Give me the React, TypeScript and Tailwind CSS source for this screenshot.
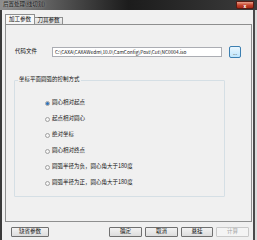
import React from "react"

const font = { fontFamily: '"Noto Sans CJK SC", "Noto Sans", sans-serif' }

export default function App() {
  return (
    <div className="w-[257px] h-[240px] flex flex-col bg-[#f0f0f0] overflow-hidden" style={font}>
      {/* Title bar */}
      <div className="h-[10px] flex items-center bg-gradient-to-r from-[#8d8d8d] via-[#1c1c1c] to-[#3c3c3c]">
        <span className="pl-[3px] text-[5.5px] leading-none text-[#1a1a1a] [text-shadow:0_0_3px_rgb(255_255_255_/_60%)]">
          后置处理(线切割)
        </span>
        <div className="ml-auto mr-[3px] w-[18px] h-[8px] rounded-b-[2px] border border-[#5a1a12] bg-gradient-to-b from-[#e8a08c] via-[#c7452d] to-[#a52a17] flex items-center justify-center">
          <span className="text-[5px] leading-none font-bold text-white">x</span>
        </div>
      </div>

      {/* Body with frame */}
      <div className="flex-1 flex">
        <div className="w-[2px] bg-[#3a3a3a]" />
        <div className="flex-1 flex flex-col pl-[3px] pr-[1px] pt-[4px]">
          {/* Tabs */}
          <div className="flex items-end h-[10px]">
            <div className="h-[10px] w-[30px] border border-b-0 border-[#8e8f8f] bg-[#f7f7f7] flex items-center justify-center text-[5.5px] leading-none text-[#111]">
              加工参数
            </div>
            <div className="h-[7px] w-[28px] border border-b-0 border-l-0 border-[#8e8f8f] bg-gradient-to-b from-[#f2f2f2] to-[#dcdcdc] flex items-center justify-center text-[5.5px] leading-none text-[#111]">
              刀具参数
            </div>
          </div>

          {/* Tab panel */}
          <div className="h-[198px] border border-[#8e8f8f] flex flex-col">
            <div className="flex items-center mt-[21px] h-[12px]">
              <span className="ml-[9px] w-[37px] text-[5.5px] leading-none text-[#111]">代码文件</span>
              <div className="w-[170px] h-[10px] border border-[#abadb3] bg-white flex items-center px-[2px] text-[4.8px] leading-none text-[#111] whitespace-nowrap overflow-hidden">
                C:\CAXA\CAXAWedm\10.0\CamConfig\Post\Cut\NC0004.iso
              </div>
              <div className="ml-[7px] w-[12px] h-[12px] rounded-[2px] border border-[#3c7fb1] bg-gradient-to-b from-[#eaf6fd] to-[#bee6fd] flex items-center justify-center text-[5px] leading-none text-[#555]">
                ...
              </div>
            </div>

            {/* Group box */}
            <div className="relative ml-[8px] mt-[22px] w-[211px] h-[117px] border border-[#d5dfe5] rounded-[1px]">
              <span className="absolute -top-[4px] left-[3px] px-[1px] bg-[#f0f0f0] text-[5.5px] leading-none text-[#111]">
                坐标平面圆弧的控制方式
              </span>
              <div className="flex flex-col gap-[10px] pl-[30px] pt-[19px]">
                {options.map((o, i) => (
                  <div key={o} className="flex items-center h-[6px]">
                    <div className="w-[5px] h-[5px] rounded-full border border-[#a0a0a0] bg-[#f4f4f4] flex items-center justify-center">
                      {i === 0 && <div className="w-[3px] h-[3px] rounded-full bg-[#2b6fb8]" />}
                    </div>
                    <span className="ml-[2px] text-[5.5px] leading-none text-[#111] whitespace-nowrap">{o}</span>
                  </div>
                ))}
              </div>
            </div>
          </div>

          {/* Bottom buttons */}
          <div className="flex mt-[5px]">
            <Btn className="ml-[6px] w-[38px]">缺省参数</Btn>
            <Btn className="ml-[60px] w-[33px]">确定</Btn>
            <Btn className="ml-[3px] w-[33px]">取消</Btn>
            <Btn className="ml-[3px] w-[32px]">悬挂</Btn>
            <Btn className="ml-[3px] w-[33px]" disabled>计算</Btn>
          </div>
        </div>
        <div className="w-[2px] bg-[#4a4a4a]" />
        <div className="w-[2px] bg-[#dcdcdc]" />
      </div>
    </div>
  )
}

function Btn({ children, className, disabled }: { children: React.ReactNode; className?: string; disabled?: boolean }) {
  return (
    <div
      className={
        "h-[10px] rounded-[1px] border flex items-center justify-center text-[5.5px] leading-none " +
        (disabled
          ? "border-[#c9c9c9] bg-[#f4f4f4] text-[#a0a0a0] "
          : "border-[#707070] bg-gradient-to-b from-[#f2f2f2] to-[#dddddd] text-[#111] ") +
        (className ?? "")
      }
    >
      {children}
    </div>
  )
}

const options = [
  "圆心相对起点",
  "起点相对圆心",
  "绝对坐标",
  "圆心相对终点",
  "圆弧半径为负，圆心角大于180度",
  "圆弧半径为正，圆心角大于180度",
]
